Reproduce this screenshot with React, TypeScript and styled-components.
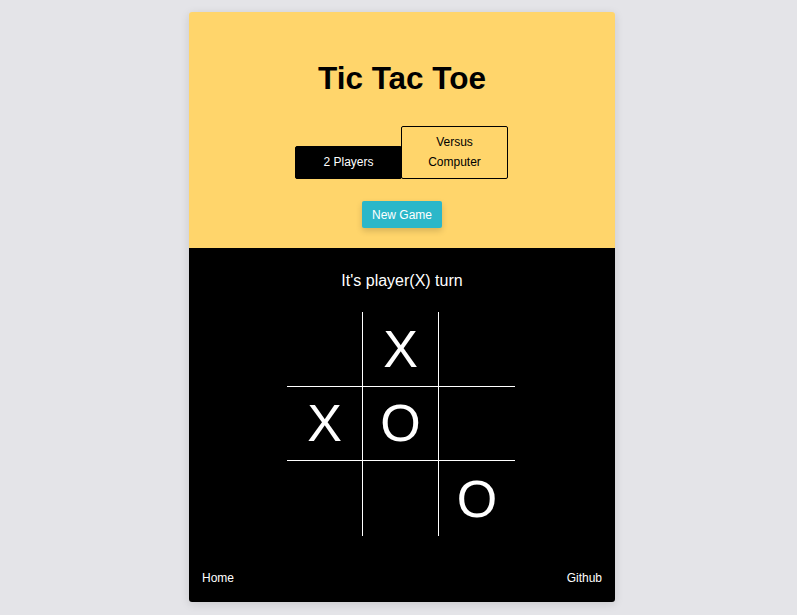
import styled, { createGlobalStyle } from "styled-components";

type Mark = "X" | "O" | "";

const board: Mark[] = ["", "X", "", "X", "O", "", "", "", "O"];

const GlobalStyle = createGlobalStyle`
  html, body {
    margin: 0;
    padding: 0;
    background: #e4e4e8;
    font-family: "Liberation Sans", Arial, sans-serif;
  }
`;

const Page = styled.div`
  padding: 12px 0 13px 7px;
`;

const Card = styled.div`
  width: 426px;
  margin: 0 auto;
  border-radius: 3px;
  overflow: hidden;
  box-shadow: 0 2px 10px rgba(0, 0, 0, 0.12);
`;

const Header = styled.header`
  background: #ffd56b;
  padding: 48px 0 20px;
  display: flex;
  flex-direction: column;
  align-items: center;
`;

const Title = styled.h1`
  margin: 0;
  font-size: 31.5px;
  line-height: 37px;
  font-weight: 700;
  color: #000;
`;

const Modes = styled.div`
  display: flex;
  align-items: flex-end;
  margin: 29px 1px 0 0;
`;

const ModeButton = styled.button<{ $active?: boolean }>`
  width: 107px;
  padding: 6px 10px;
  border: 1px solid #000;
  border-radius: 2px;
  background: ${p => (p.$active ? "#000" : "transparent")};
  color: ${p => (p.$active ? "#fff" : "#000")};
  font-family: inherit;
  font-size: 12px;
  line-height: 19.5px;
  cursor: pointer;
  & + & {
    margin-left: -1px;
  }
`;

const NewGame = styled.button`
  margin-top: 22px;
  width: 80px;
  height: 27px;
  padding: 0;
  border: none;
  border-radius: 2px;
  background: #2bb7c9;
  color: #fff;
  font-family: inherit;
  font-size: 12px;
  box-shadow: 0 3px 6px rgba(0, 0, 0, 0.16);
  cursor: pointer;
`;

const Game = styled.main`
  background: #000;
  color: #fff;
  padding: 24px 13px 17px;
  display: flex;
  flex-direction: column;
  align-items: center;
`;

const Status = styled.div`
  font-size: 16px;
  line-height: 18px;
`;

const Board = styled.div`
  margin: 22px 2px 0 0;
  display: grid;
  grid-template-columns: repeat(3, 76px);
  grid-template-rows: repeat(3, 74.67px);
`;

const Cell = styled.div<{ $col: number; $row: number }>`
  display: flex;
  align-items: center;
  justify-content: center;
  font-size: 52px;
  color: #fff;
  border-right: ${p => (p.$col < 2 ? "1px solid #fff" : "none")};
  border-bottom: ${p => (p.$row < 2 ? "1px solid #fff" : "none")};
`;

const Footer = styled.footer`
  align-self: stretch;
  margin-top: 35px;
  display: flex;
  justify-content: space-between;
  font-size: 12px;
  line-height: 14px;
  a {
    color: #fff;
    text-decoration: none;
  }
`;

export default function App() {
  return (
    <>
      <GlobalStyle />
      <Page>
        <Card>
          <Header>
            <Title>Tic Tac Toe</Title>
            <Modes>
              <ModeButton $active>2 Players</ModeButton>
              <ModeButton>Versus<br />Computer</ModeButton>
            </Modes>
            <NewGame>New Game</NewGame>
          </Header>
          <Game>
            <Status>It's player(X) turn</Status>
            <Board>
              {board.map((m, i) => (
                <Cell key={i} $col={i % 3} $row={Math.floor(i / 3)}>{m}</Cell>
              ))}
            </Board>
            <Footer>
              <a href="/">Home</a>
              <a href="/">Github</a>
            </Footer>
          </Game>
        </Card>
      </Page>
    </>
  );
}
